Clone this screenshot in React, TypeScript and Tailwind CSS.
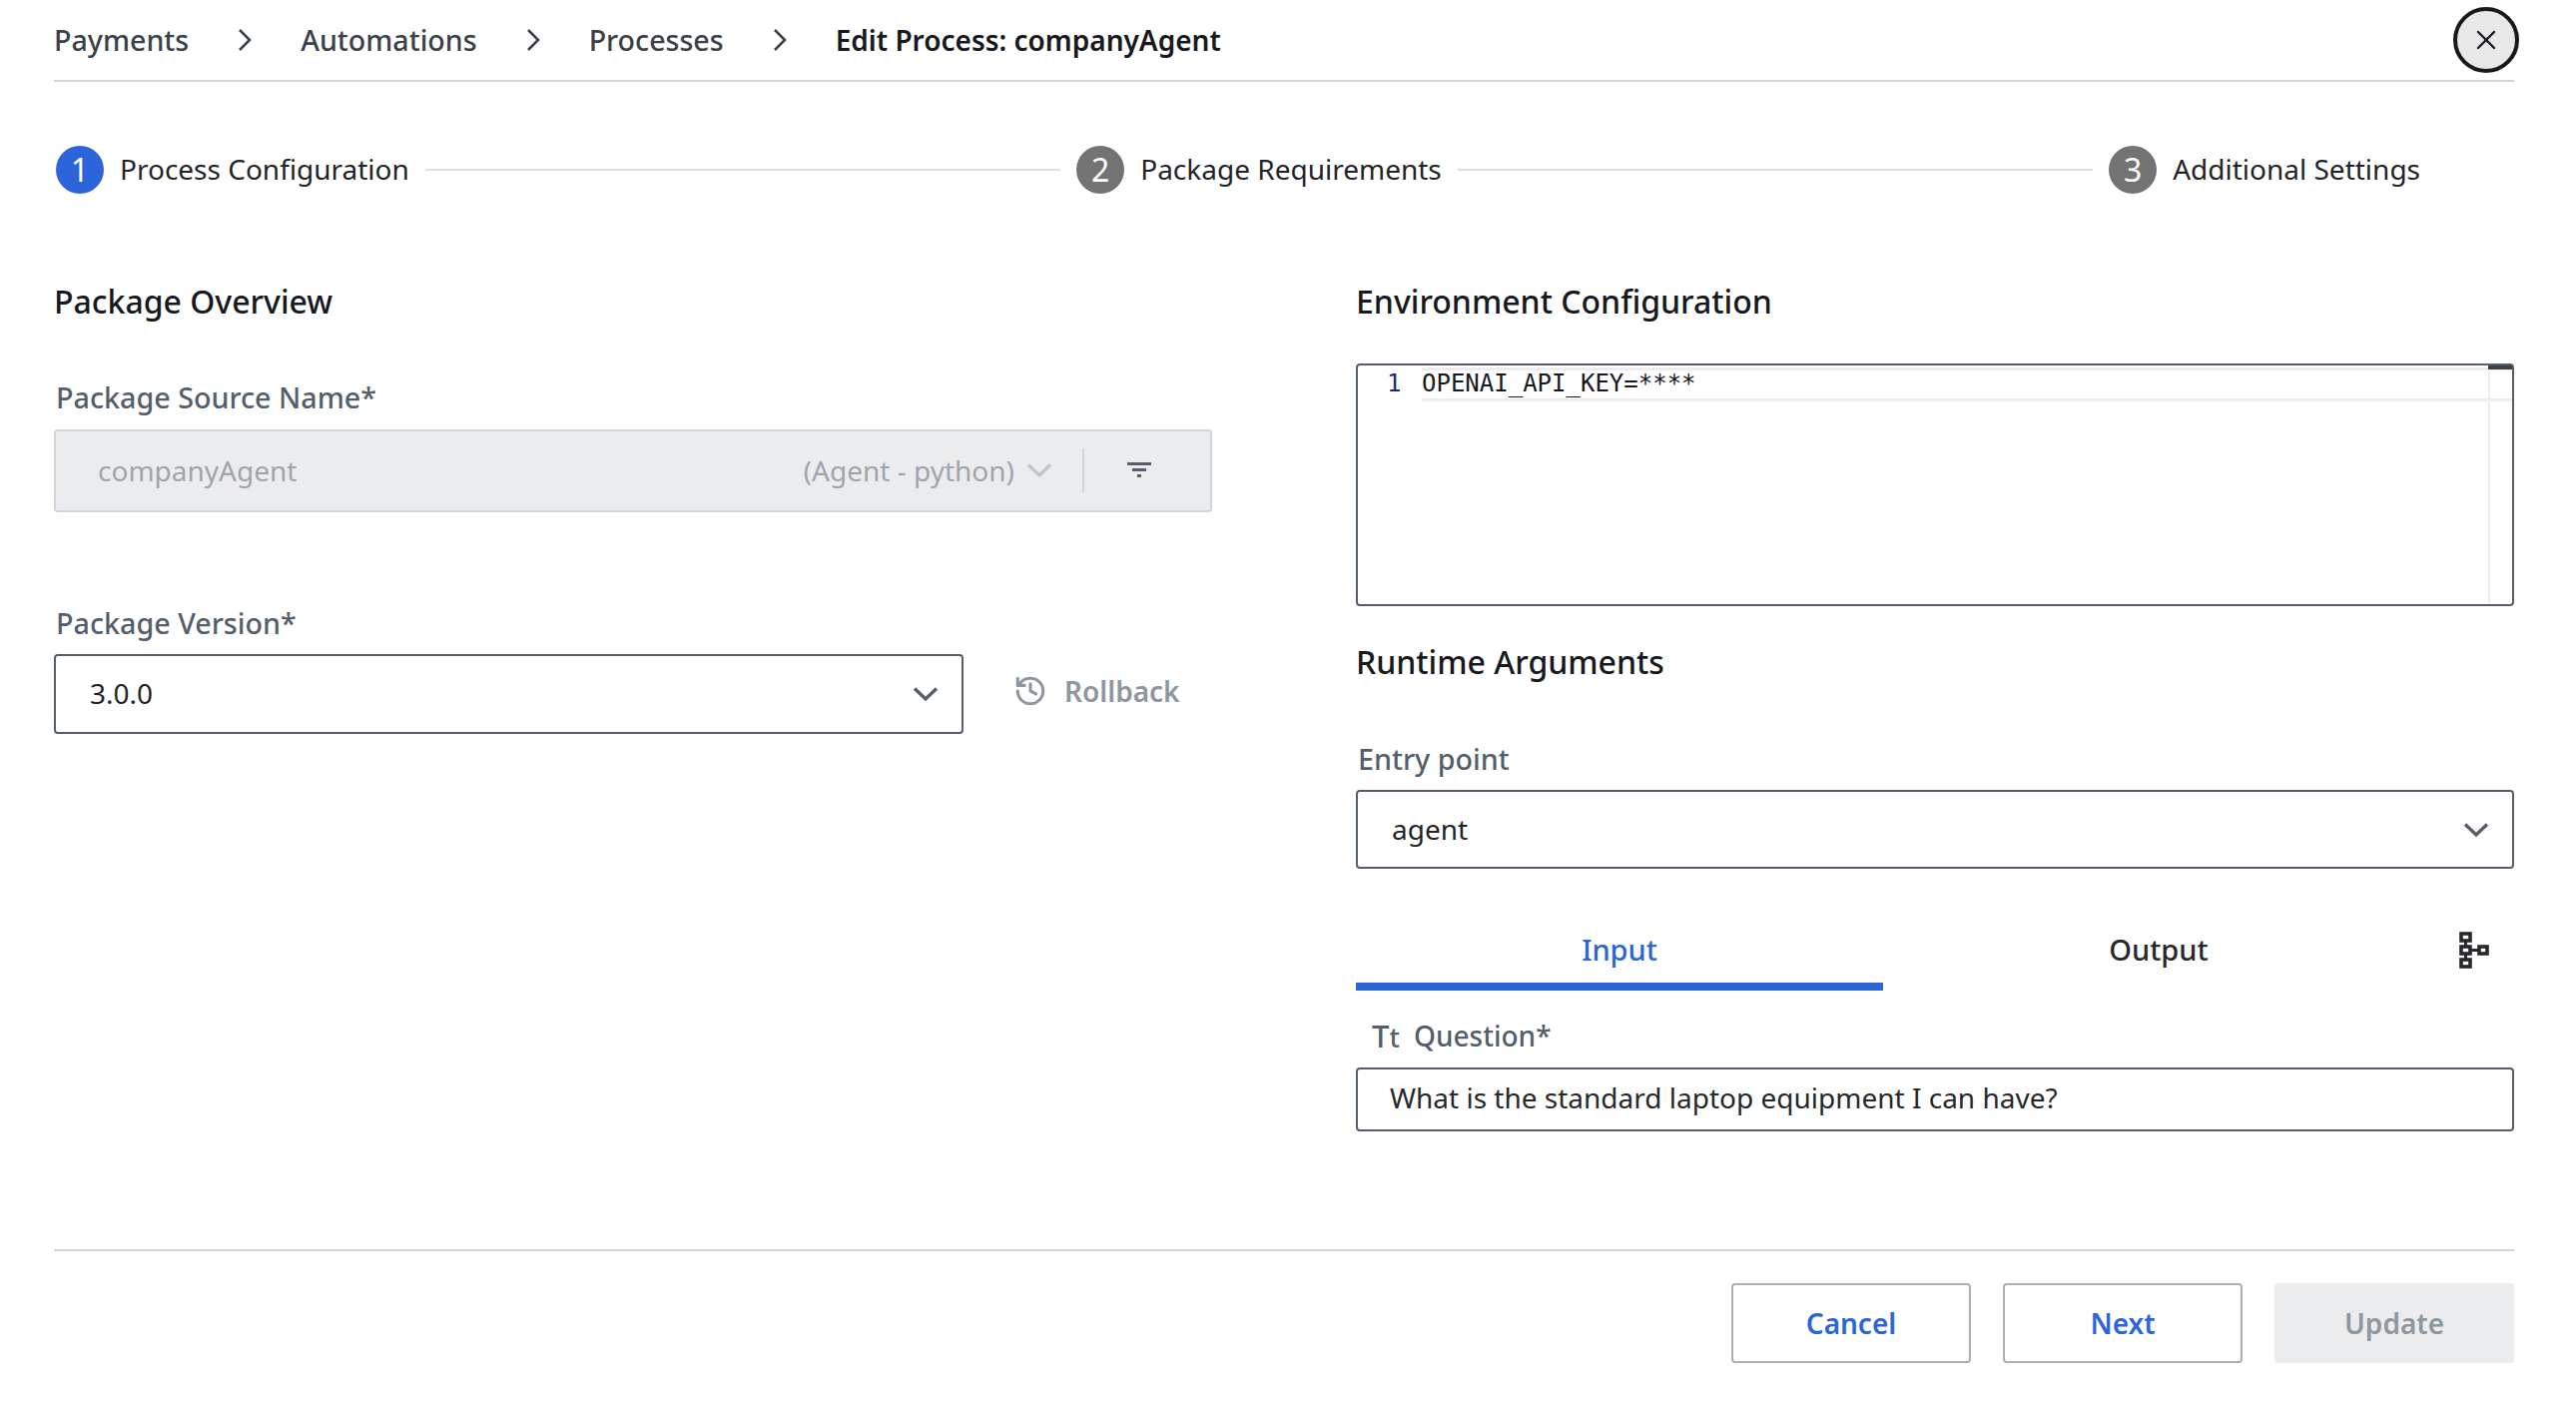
import React from 'react';
import { History, X } from 'lucide-react';

const ChevronDown: React.FC<{ className?: string }> = ({ className }) => (
    <svg className={className} width="26" height="16" viewBox="0 0 26 16" fill="none" stroke="currentColor" strokeWidth="3.4">
        <path d="M2 2.500 13 13 24 2.500" />
    </svg>
);

const ChevronRight = () => (
    <svg className="mx-[49px] text-[#3a4149]" width="14" height="24" viewBox="0 0 14 24" fill="none" stroke="currentColor" strokeWidth="2.6">
        <path d="M2 2 12 12 2 22" />
    </svg>
);

const Crumb: React.FC<{ label: string; current?: boolean }> = ({ label, current }) => (
    <div className="flex items-center">
        <span className={current ? 'text-[28px] font-semibold text-[#16191d]' : 'text-[28.6px] font-medium text-[#3a4149]'}>{label}</span>
        {!current && <ChevronRight />}
    </div>
);

const Step: React.FC<{ n: number; label: string; active?: boolean }> = ({ n, label, active }) => (
    <div className="flex items-center gap-[16px] shrink-0">
        <div className={`flex h-[48px] w-[48px] items-center justify-center rounded-full text-[32px] text-white ${active ? 'bg-[#2b65d9]' : 'bg-[#737373]'}`}>
            {n}
        </div>
        <span className="pb-[2px] text-[#1f2429]">{label}</span>
    </div>
);

const Label: React.FC<{ children: React.ReactNode }> = ({ children }) => (
    <label className="block h-[36px] pl-[2px] text-[28.7px] font-medium leading-[36px] text-[#545f6b]">{children}</label>
);

const FilterIcon = () => (
    <svg width="24" height="16" viewBox="0 0 24 16" fill="#545f6b">
        <rect x="0" y="0" width="24" height="3" />
        <rect x="5" y="6" width="14" height="3" />
        <rect x="10" y="12" width="4" height="3" />
    </svg>
);

const SchemaIcon = () => (
    <svg width="30" height="38" viewBox="0 0 30 38" fill="none" stroke="#26282b" strokeWidth="3.6">
        <rect x="2" y="2" width="9" height="7" />
        <rect x="2" y="15" width="9" height="7" />
        <rect x="2" y="28" width="9" height="7" />
        <rect x="20" y="15" width="8" height="7" />
        <path d="M6.500 9v6M6.500 22v6M11 18.500h9" strokeWidth="3" />
    </svg>
);

export default function App() {
    return (
        <div className="h-[1406px] w-[2580px] overflow-hidden bg-white pl-[54px] pr-[62px] font-['Noto_Sans',sans-serif] text-[#1f2429]">
            {/* Breadcrumb */}
            <div className="flex h-[82px] items-center justify-between border-b-2 border-[#d1d5da]">
                <div className="flex items-center">
                    <Crumb label="Payments" />
                    <Crumb label="Automations" />
                    <Crumb label="Processes" />
                    <Crumb label="Edit Process: companyAgent" current />
                </div>
                <button className="-mr-[5px] flex h-[66px] w-[66px] items-center justify-center rounded-full border-[4px] border-[#16191d] bg-[#e8e8e8]">
                    <X size={32} strokeWidth={1.8} className="text-[#16191d]" />
                </button>
            </div>

            {/* Stepper */}
            <div className="mt-[64px] flex h-[48px] items-center pl-[2px] pr-[94px] text-[28px]">
                <Step n={1} label="Process Configuration" active />
                <div className="mx-[16px] h-[2px] flex-1 bg-[#e0e0e0]" />
                <Step n={2} label="Package Requirements" />
                <div className="mx-[16px] h-[2px] flex-1 bg-[#e0e0e0]" />
                <Step n={3} label="Additional Settings" />
            </div>

            <div className="mt-[88px] grid grid-cols-[1160px_1160px] gap-x-[144px]">
                {/* Left column */}
                <div>
                    <h2 className="h-[40px] text-[32px] font-medium leading-[40px] text-[#16191d]">Package Overview</h2>
                    <div className="mt-[58px]">
                        <Label>Package Source Name*</Label>
                    </div>
                    <div className="mt-[14px] flex h-[83px] items-center rounded-[4px] border-2 border-[#d1d5da] bg-[#ebecee] pb-[2px] pl-[42px] text-[28px] text-[#a0a5ab]">
                        <span className="flex-1">companyAgent</span>
                        <span>(Agent - python)</span>
                        <ChevronDown className="ml-[12px] text-[#c1c5ca]" />
                        <div className="ml-[30px] h-[44px] w-[2px] bg-[#d1d5da]" />
                        <div className="flex w-[126px] justify-center pr-[16px]">
                            <FilterIcon />
                        </div>
                    </div>
                    <div className="mt-[93px]">
                        <Label>Package Version*</Label>
                    </div>
                    <div className="mt-[13px] flex items-center">
                        <div className="flex h-[80px] w-[911px] items-center justify-between rounded-[4px] border-2 border-[#545f6b] pb-[2px] pl-[34px] pr-[23px] text-[28px]">
                            <span>3.0.0</span>
                            <ChevronDown className="mt-[2px] text-[#545f6b]" />
                        </div>
                        <div className="mb-[6px] ml-[50px] flex items-center gap-[17px] text-[28px] font-semibold text-[#8e969e]">
                            <History size={34} strokeWidth={2.2} />
                            <span>Rollback</span>
                        </div>
                    </div>
                </div>

                {/* Right column */}
                <div>
                    <h2 className="h-[40px] text-[32px] font-medium leading-[40px] text-[#16191d]">Environment Configuration</h2>
                    <div className="relative mt-[42px] h-[243px] rounded-[4px] border-2 border-[#545f6b] pl-[64px] pt-[2px]">
                        <div className="flex h-[34px] items-center border-y-[3px] border-[#eeeeee] pb-[2px] font-['DejaVu_Sans_Mono',monospace] text-[24px] text-[#16191d]">
                            OPENAI_API_KEY=****
                        </div>
                        <span className="absolute left-[29px] top-0 font-['DejaVu_Sans_Mono',monospace] text-[24px] leading-[36px] text-[#1a2a6c]">1</span>
                        <div className="absolute bottom-0 right-0 top-0 w-[24px] border-l-2 border-[#eeeeee]" />
                        <div className="absolute right-0 top-0 h-[4px] w-[24px] bg-[#3b4149]" />
                    </div>
                    <h2 className="mt-[36px] h-[40px] text-[32px] font-medium leading-[40px] text-[#16191d]">Runtime Arguments</h2>
                    <div className="mt-[59px]">
                        <Label>Entry point</Label>
                    </div>
                    <div className="mt-[13px] flex h-[79px] items-center justify-between rounded-[4px] border-2 border-[#545f6b] pb-[2px] pl-[34px] pr-[23px] text-[28px]">
                        <span>agent</span>
                        <ChevronDown className="mt-[2px] text-[#545f6b]" />
                    </div>
                    <div className="mt-[45px] flex h-[77px] text-[29px] font-medium">
                        <div className="flex w-[528px] items-start justify-center border-b-8 border-[#2b65d9] pt-[14px] text-[#2b65d9]">Input</div>
                        <div className="flex w-[552px] items-start justify-center pt-[14px] text-[#26282b]">Output</div>
                        <div className="flex flex-1 items-start justify-center pt-[18px]">
                            <SchemaIcon />
                        </div>
                    </div>
                    <div className="mt-[27px] flex h-[36px] items-center pl-[16px] text-[28px] font-medium text-[#545f6b]">
                        <span className="w-[42px] text-[31px]">T<span className="text-[27px]">t</span></span>
                        <span>Question*</span>
                    </div>
                    <div className="mt-[14px] flex h-[64px] items-center rounded-[4px] border-2 border-[#545f6b] pb-[5px] pl-[32px] text-[28px] text-[#26282b]">
                        What is the standard laptop equipment I can have?
                    </div>
                </div>
            </div>

            {/* Footer */}
            <div className="mt-[118px] flex justify-end gap-[32px] border-t-2 border-[#d1d5da] pt-[32px] text-[28px] font-semibold">
                <button className="h-[80px] w-[240px] rounded-[4px] border-2 border-[#a8afb6] text-[#2b65d9]">Cancel</button>
                <button className="h-[80px] w-[240px] rounded-[4px] border-2 border-[#a8afb6] text-[#2b65d9]">Next</button>
                <button className="h-[80px] w-[240px] rounded-[4px] bg-[#ebecee] text-[#8e969e]">Update</button>
            </div>
        </div>
    );
}
